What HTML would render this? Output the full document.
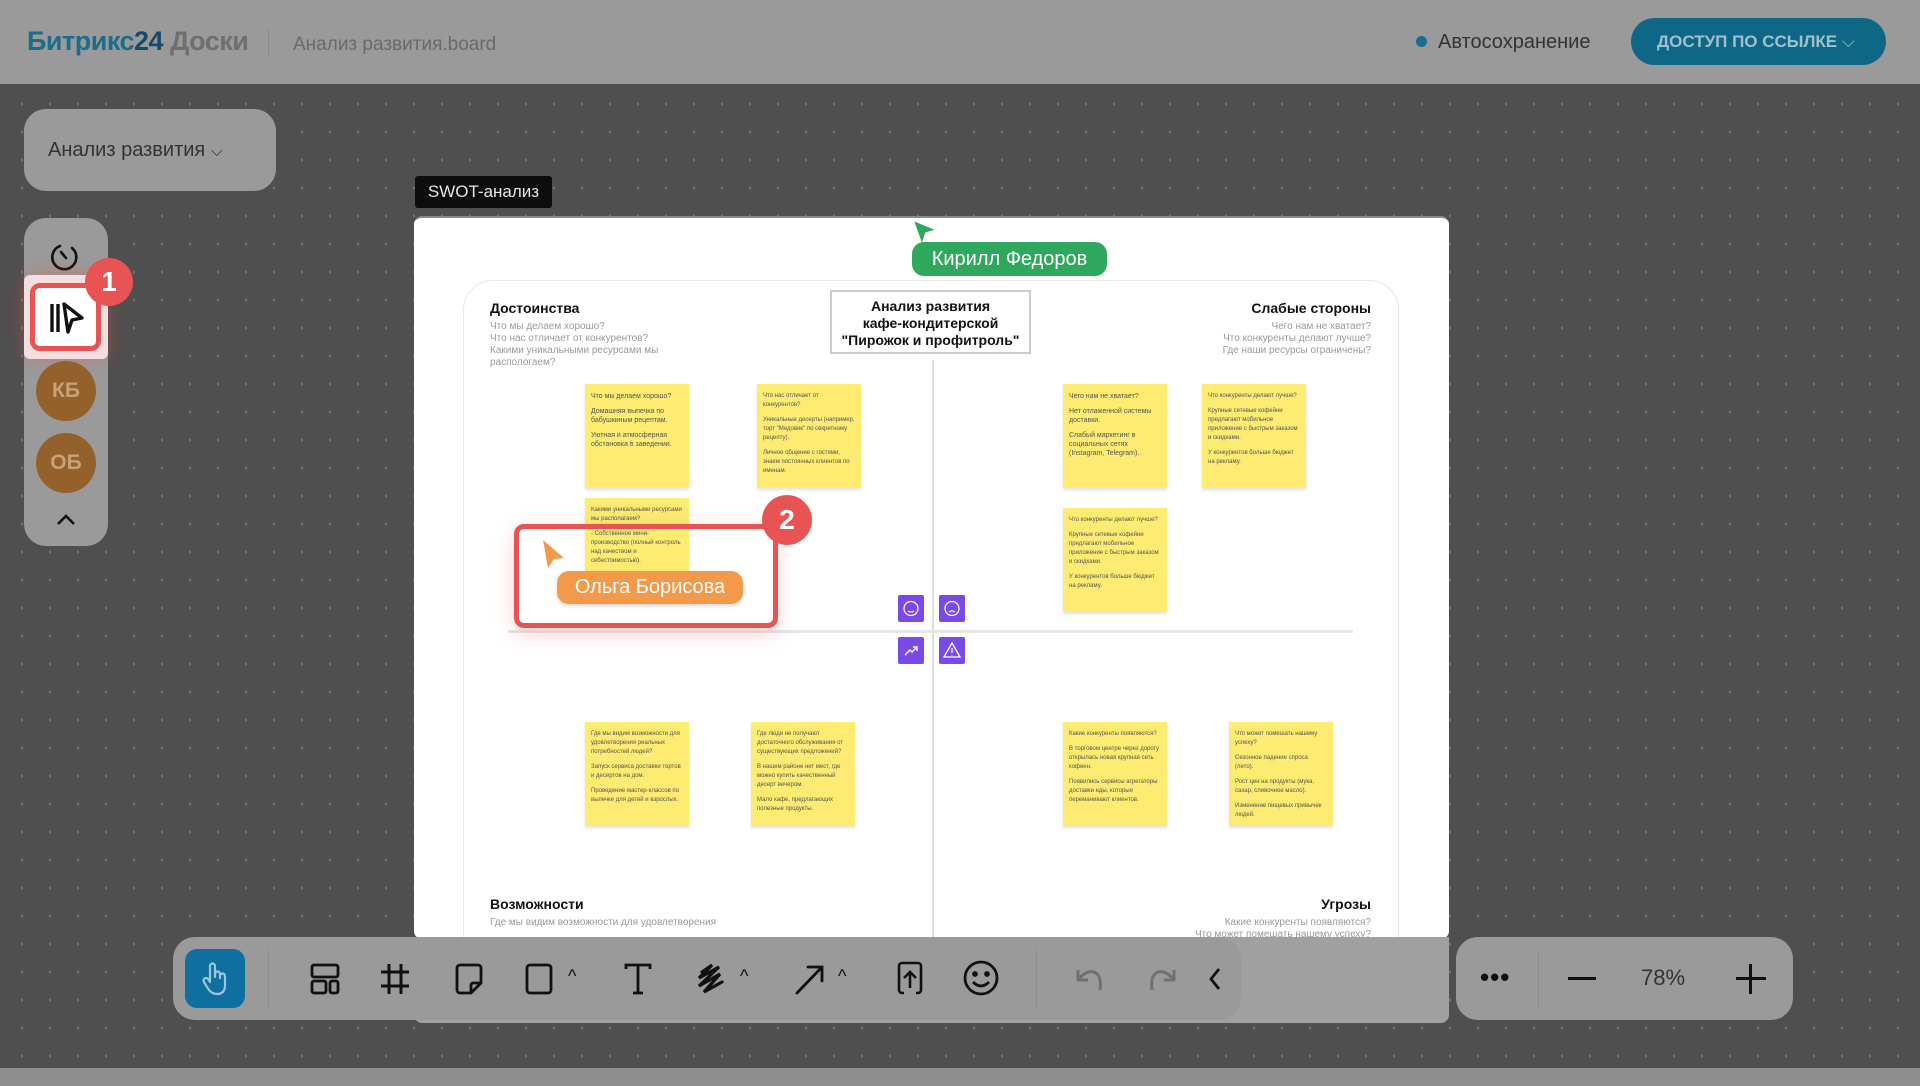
<!DOCTYPE html>
<html><head><meta charset="utf-8"><style>
*{margin:0;padding:0;box-sizing:border-box}
body{width:1920px;height:1086px;position:relative;overflow:hidden;font-family:"Liberation Sans",sans-serif;background:#4f4f4f}
.a{position:absolute}
#canvas{left:0;top:84px;width:1920px;height:984px;background-color:#4f4f4f;background-image:radial-gradient(ellipse 1px 2px,#727272 80%,transparent 100%);background-size:28px 28px;background-position:8px 6px}
#hdr{left:0;top:0;width:1920px;height:84px;background:#9a9a9a}
#foot{left:0;top:1068px;width:1920px;height:18px;background:#8e8e8e}
.note{position:absolute;width:104px;height:104px;background:#fdeb72;box-shadow:0 2px 3px rgba(0,0,0,.12);padding:8px 6px;font-size:6px;line-height:9px;color:#555}
.note p{margin-bottom:6px}
.pi{position:absolute;width:26px;height:27px;background:#7a4ae8;border-radius:2px}
.tb{position:absolute;top:958px}
</style></head><body>
<div class="a" id="canvas"></div>
<div class="a" id="hdr">
  <div class="a" style="left:27px;top:26px;font-size:27px;font-weight:bold;letter-spacing:-0.5px"><span style="color:#1d6c8c">Битрикс</span><span style="color:#164a6a">24</span> <span style="color:#6f6f6f">Доски</span></div>
  <div class="a" style="left:268px;top:30px;width:1px;height:26px;background:#8a8a8a"></div>
  <div class="a" style="left:293px;top:34px;font-size:19px;color:#6a6a6a">Анализ развития.board</div>
  <div class="a" style="left:1416px;top:36px;width:11px;height:11px;border-radius:50%;background:#1a6d8f"></div>
  <div class="a" style="left:1438px;top:31px;font-size:20px;color:#333">Автосохранение</div>
  <div class="a" style="left:1631px;top:18px;width:255px;height:47px;border-radius:24px;background:#0f6786;color:#9fc0cc;font-weight:bold;font-size:17px;line-height:47px;padding-left:26px">ДОСТУП ПО ССЫЛКЕ <span style="font-weight:normal">⌵</span></div>
</div>
<div class="a" id="foot"></div>

<div class="a" style="left:24px;top:109px;width:252px;height:82px;border-radius:22px;background:#9a9a9a;font-size:20px;color:#333;line-height:82px;padding-left:24px">Анализ развития <span style="font-size:16px">⌵</span></div>

<div class="a" style="left:24px;top:218px;width:84px;height:328px;border-radius:22px;background:#9a9a9a"></div>
<svg class="a" style="left:50px;top:241px" width="32" height="32" viewBox="0 0 32 32" fill="none" stroke="#111" stroke-width="2.6" stroke-linecap="round"><path d="M10 5 A12 12 0 1 0 22 7"/><path d="M16 17 L11 11"/></svg>
<div class="a" style="left:24px;top:275px;width:84px;height:84px;border-radius:6px;background:#f4dfe0;box-shadow:0 0 16px rgba(240,80,80,.4)"></div>
<div class="a" style="left:30px;top:283px;width:71px;height:68px;border-radius:10px;background:#fff;border:5px solid #e85454"></div>
<svg class="a" style="left:48px;top:300px" width="38" height="36" viewBox="0 0 38 36" fill="none" stroke="#111" stroke-width="3.4" stroke-linejoin="round"><path d="M4 4 V32 M10 4 V32"/><path d="M16 4 L34 18 L24 20 L20 32 Z"/></svg>
<div class="a" style="left:85px;top:258px;width:48px;height:48px;border-radius:50%;background:#e85454;color:#fff;font-weight:bold;font-size:28px;text-align:center;line-height:48px">1</div>
<div class="a" style="left:36px;top:361px;width:60px;height:60px;border-radius:50%;background:#94612d;color:#c9a078;font-weight:bold;font-size:21px;text-align:center;line-height:60px">КБ</div>
<div class="a" style="left:36px;top:433px;width:60px;height:60px;border-radius:50%;background:#94612d;color:#c9a078;font-weight:bold;font-size:21px;text-align:center;line-height:60px">ОБ</div>
<svg class="a" style="left:55px;top:511px" width="22" height="16" viewBox="0 0 22 16" fill="none" stroke="#111" stroke-width="2.6"><path d="M3 13 L11 5 L19 13"/></svg>

<div class="a" style="left:415px;top:176px;width:137px;height:32px;background:#0d0d0d;border-radius:3px;color:#e6e6e6;font-size:17px;line-height:32px;text-align:center">SWOT-анализ</div>

<div class="a" style="left:414px;top:216px;width:1035px;height:723px;background:#fff;border-radius:8px;overflow:hidden;border-top:2px solid #8a8a8a">
  <div class="a" style="left:49px;top:62px;width:936px;height:700px;border:1.5px solid #e6e6e6;border-radius:30px"></div>
  <div class="a" style="left:416px;top:72px;width:201px;height:64px;border:2px solid #ccc;font-weight:bold;font-size:14px;line-height:17px;text-align:center;padding-top:6px;color:#111">Анализ развития<br>кафе-кондитерской<br>"Пирожок и профитроль"</div>
  <div class="a" style="left:518px;top:142px;width:1.5px;height:580px;background:#ddd"></div>
  <div class="a" style="left:94px;top:412px;width:845px;height:3px;background:#e6e6e6"></div>
  <div class="a" style="left:76px;top:82px;font-weight:bold;font-size:14px;color:#111">Достоинства</div>
  <div class="a" style="left:76px;top:103px;font-size:10px;line-height:12px;color:#999">Что мы делаем хорошо?<br>Что нас отличает от конкурентов?<br>Какими уникальными ресурсами мы<br>распологаем?</div>
  <div class="a" style="right:78px;top:82px;font-weight:bold;font-size:14px;color:#111;text-align:right">Слабые стороны</div>
  <div class="a" style="right:78px;top:103px;font-size:10px;line-height:12px;color:#999;text-align:right">Чего нам не хватает?<br>Что конкуренты делают лучше?<br>Где наши ресурсы ограничены?</div>
  <div class="a" style="left:76px;top:678px;font-weight:bold;font-size:14px;color:#111">Возможности</div>
  <div class="a" style="left:76px;top:699px;font-size:10px;color:#999">Где мы видим возможности для удовлетворения</div>
  <div class="a" style="right:78px;top:678px;font-weight:bold;font-size:14px;color:#111">Угрозы</div>
  <div class="a" style="right:78px;top:699px;font-size:10px;line-height:12px;color:#999;text-align:right">Какие конкуренты появляются?<br>Что может помешать нашему успеху?</div>

  <div class="note" style="left:171px;top:166px;font-size:7px"><p>Что мы делаем хорошо?</p><p>Домашняя выпечка по бабушкиным рецептам.</p><p>Уютная и атмосферная обстановка в заведении.</p></div>
  <div class="note" style="left:343px;top:166px"><p>Что нас отличает от конкурентов?</p><p>Уникальные десерты (например, торт "Медовик" по секретному рецепту).</p><p>Личное общение с гостями, знаем постоянных клиентов по именам.</p></div>
  <div class="note" style="left:171px;top:280px"><p>Какими уникальными ресурсами мы располагаем?</p><p>- Собственное мини-производство (полный контроль над качеством и себестоимостью).</p></div>
  <div class="note" style="left:649px;top:166px;font-size:7px"><p>Чего нам не хватает?</p><p>Нет отлаженной системы доставки.</p><p>Слабый маркетинг в социальных сетях (Instagram, Telegram).</p></div>
  <div class="note" style="left:788px;top:166px"><p>Что конкуренты делают лучше?</p><p>Крупные сетевые кофейни предлагают мобильное приложение с быстрым заказом и скидками.</p><p>У конкурентов больше бюджет на рекламу.</p></div>
  <div class="note" style="left:649px;top:290px"><p>Что конкуренты делают лучше?</p><p>Крупные сетевые кофейни предлагают мобильное приложение с быстрым заказом и скидками.</p><p>У конкурентов больше бюджет на рекламу.</p></div>
  <div class="note" style="left:171px;top:504px"><p>Где мы видим возможности для удовлетворения реальных потребностей людей?</p><p>Запуск сервиса доставки тортов и десертов на дом.</p><p>Проведение мастер-классов по выпечке для детей и взрослых.</p></div>
  <div class="note" style="left:337px;top:504px"><p>Где люди не получают достаточного обслуживания от существующих предложений?</p><p>В нашем районе нет мест, где можно купить качественный десерт вечером.</p><p>Мало кафе, предлагающих полезные продукты.</p></div>
  <div class="note" style="left:649px;top:504px"><p>Какие конкуренты появляются?</p><p>В торговом центре через дорогу открылась новая крупная сеть кофеен.</p><p>Появились сервисы агрегаторы доставки еды, которые переманивают клиентов.</p></div>
  <div class="note" style="left:815px;top:504px"><p>Что может помешать нашему успеху?</p><p>Сезонное падение спроса (лето).</p><p>Рост цен на продукты (мука, сахар, сливочное масло).</p><p>Изменение пищевых привычек людей.</p></div>

  <div class="pi" style="left:484px;top:377px"><svg width="26" height="27" viewBox="0 0 26 27" fill="none" stroke="#fff" stroke-width="1.2"><circle cx="13" cy="13.5" r="7"/><path d="M10 16 Q13 18 16 16"/></svg></div>
  <div class="pi" style="left:525px;top:377px"><svg width="26" height="27" viewBox="0 0 26 27" fill="none" stroke="#fff" stroke-width="1.2"><circle cx="13" cy="13.5" r="7"/><path d="M10 17 Q13 15 16 17"/></svg></div>
  <div class="pi" style="left:484px;top:419px"><svg width="26" height="27" viewBox="0 0 26 27" fill="none" stroke="#fff" stroke-width="1.4"><path d="M7 18 L12 13 L14 15 L19 10 M15 10 H19 V14"/></svg></div>
  <div class="pi" style="left:525px;top:419px"><svg width="26" height="27" viewBox="0 0 26 27" fill="none" stroke="#fff" stroke-width="1.3"><path d="M13 6 L21 20 H5 Z M13 11 V16 M13 18 V18.5"/></svg></div>
</div>

<svg class="a" style="left:910px;top:218px" width="30" height="30" viewBox="0 0 30 30"><path d="M3 2 L27 12 L16 15 L12 27 Z" fill="#2ea85c" stroke="#fff" stroke-width="1.5"/></svg>
<div class="a" style="left:912px;top:242px;width:195px;height:34px;border-radius:12px;background:#2ea85c;color:#fff;font-size:20px;line-height:34px;text-align:center">Кирилл Федоров</div>

<div class="a" style="left:514px;top:524px;width:264px;height:104px;border:5px solid #e85454;border-radius:10px;box-shadow:0 6px 20px rgba(232,84,84,.25)"></div>
<div class="a" style="left:762px;top:495px;width:50px;height:50px;border-radius:50%;background:#e85454;color:#fff;font-weight:bold;font-size:28px;text-align:center;line-height:50px">2</div>
<svg class="a" style="left:540px;top:538px" width="26" height="32" viewBox="0 0 26 32"><path d="M3 2 L24 20 L14 21 L8 30 Z" fill="#f39a4a"/></svg>
<div class="a" style="left:557px;top:571px;width:186px;height:33px;border-radius:12px;background:#f39a4a;color:#fff;font-size:20px;line-height:33px;text-align:center;box-shadow:0 2px 4px rgba(0,0,0,.15)">Ольга Борисова</div>

<div class="a" style="left:414px;top:937px;width:1035px;height:86px;background:#a0a0a0;border-radius:0 0 8px 8px"></div>
<div class="a" style="left:173px;top:937px;width:1068px;height:83px;background:#9a9a9a;border-radius:22px"></div>
<div class="a" style="left:185px;top:949px;width:60px;height:59px;background:#0f6fa0;border-radius:12px"></div>
<svg class="a" style="left:199px;top:961px" width="32" height="36" viewBox="0 0 32 36" fill="none" stroke="#9cc6dc" stroke-width="2.2" stroke-linecap="round" stroke-linejoin="round"><path d="M11 20 V5 a2.5 2.5 0 0 1 5 0 V16 M16 13 a2.5 2.5 0 0 1 5 0 V17 M21 15 a2.5 2.5 0 0 1 5 0 V24 Q26 33 18 33 Q12 33 8 26 L5 21 a2.5 2.5 0 0 1 4 -3 L11 21"/></svg>
<div class="a" style="left:268px;top:950px;width:1px;height:58px;background:#8c8c8c"></div>
<svg class="tb a" style="left:309px;top:962px" width="32" height="34" viewBox="0 0 32 34" fill="none" stroke="#111" stroke-width="2.8"><rect x="3" y="3" width="26" height="12" rx="2"/><rect x="3" y="19" width="14" height="12" rx="2"/><rect x="21" y="19" width="8" height="12" rx="2"/></svg>
<svg class="tb a" style="left:379px;top:962px" width="32" height="34" viewBox="0 0 32 34" fill="none" stroke="#111" stroke-width="3"><path d="M10 2 V32 M22 2 V32 M2 10 H30 M2 24 H30"/></svg>
<svg class="tb a" style="left:453px;top:962px" width="32" height="34" viewBox="0 0 32 34" fill="none" stroke="#111" stroke-width="2.8" stroke-linejoin="round"><path d="M7 3 H25 a3 3 0 0 1 3 3 V21 L18 31 H7 a3 3 0 0 1 -3 -3 V6 a3 3 0 0 1 3 -3 Z M18 31 V23 a2 2 0 0 1 2 -2 H28"/></svg>
<svg class="tb a" style="left:524px;top:962px" width="30" height="34" viewBox="0 0 30 34" fill="none" stroke="#111" stroke-width="2.8"><rect x="3" y="3" width="24" height="28" rx="3"/></svg>
<div class="a" style="left:568px;top:966px;font-size:18px;color:#111">^</div>
<svg class="tb a" style="left:622px;top:962px" width="32" height="34" viewBox="0 0 32 34" fill="none" stroke="#111" stroke-width="2.8"><path d="M4 7 V3 H28 V7 M16 3 V31 M11 31 H21"/></svg>
<svg class="tb a" style="left:694px;top:962px" width="34" height="34" viewBox="0 0 34 34" fill="none" stroke="#111" stroke-width="3.2" stroke-linecap="round"><path d="M8 10 L18 3 L5 16 L25 5 L5 24 L26 12 L10 30 L28 20"/></svg>
<div class="a" style="left:740px;top:966px;font-size:18px;color:#111">^</div>
<svg class="tb a" style="left:793px;top:962px" width="34" height="34" viewBox="0 0 34 34" fill="none" stroke="#111" stroke-width="2.8" stroke-linecap="round"><path d="M4 31 L29 5 M15 5 H29 V19"/></svg>
<div class="a" style="left:838px;top:966px;font-size:18px;color:#111">^</div>
<svg class="tb a" style="left:894px;top:960px" width="32" height="36" viewBox="0 0 32 36" fill="none" stroke="#111" stroke-width="2.6"><path d="M8 3 H24 a3 3 0 0 1 3 3 V30 a3 3 0 0 1 -3 3 H22 M10 33 H8 a3 3 0 0 1 -3 -3 V6 a3 3 0 0 1 3 -3 M16 28 V12 M10 18 L16 12 L22 18"/></svg>
<svg class="tb a" style="left:962px;top:958px" width="38" height="40" viewBox="0 0 38 40" fill="none" stroke="#111" stroke-width="2.8"><circle cx="19" cy="20" r="16"/><circle cx="13" cy="16" r="1.5" fill="#111"/><circle cx="25" cy="16" r="1.5" fill="#111"/><path d="M11 24 Q19 32 27 24"/></svg>
<div class="a" style="left:1036px;top:950px;width:1px;height:58px;background:#8c8c8c"></div>
<svg class="tb a" style="left:1072px;top:964px" width="36" height="30" viewBox="0 0 36 30" fill="none" stroke="#707070" stroke-width="3" stroke-linejoin="round"><path d="M6 6 V16 H16"/><path d="M6 16 Q14 6 22 8 Q30 11 28 26"/></svg>
<svg class="tb a" style="left:1144px;top:964px" width="36" height="30" viewBox="0 0 36 30" fill="none" stroke="#707070" stroke-width="3" stroke-linejoin="round"><path d="M30 6 V16 H20"/><path d="M30 16 Q22 6 14 8 Q6 11 8 26"/></svg>
<svg class="tb a" style="left:1207px;top:966px" width="16" height="26" viewBox="0 0 16 26" fill="none" stroke="#111" stroke-width="2.8"><path d="M12 3 L4 13 L12 23"/></svg>

<div class="a" style="left:1456px;top:937px;width:337px;height:83px;background:#9a9a9a;border-radius:22px"></div>
<div class="a" style="left:1480px;top:962px;font-size:26px;font-weight:bold;color:#111;letter-spacing:1px">•••</div>
<div class="a" style="left:1538px;top:950px;width:1px;height:58px;background:#8c8c8c"></div>
<div class="a" style="left:1568px;top:977px;width:28px;height:3px;background:#111"></div>
<div class="a" style="left:1641px;top:965px;font-size:22px;color:#333">78%</div>
<div class="a" style="left:1736px;top:977px;width:30px;height:3px;background:#111"></div>
<div class="a" style="left:1749px;top:964px;width:3px;height:30px;background:#111"></div>
</body></html>
